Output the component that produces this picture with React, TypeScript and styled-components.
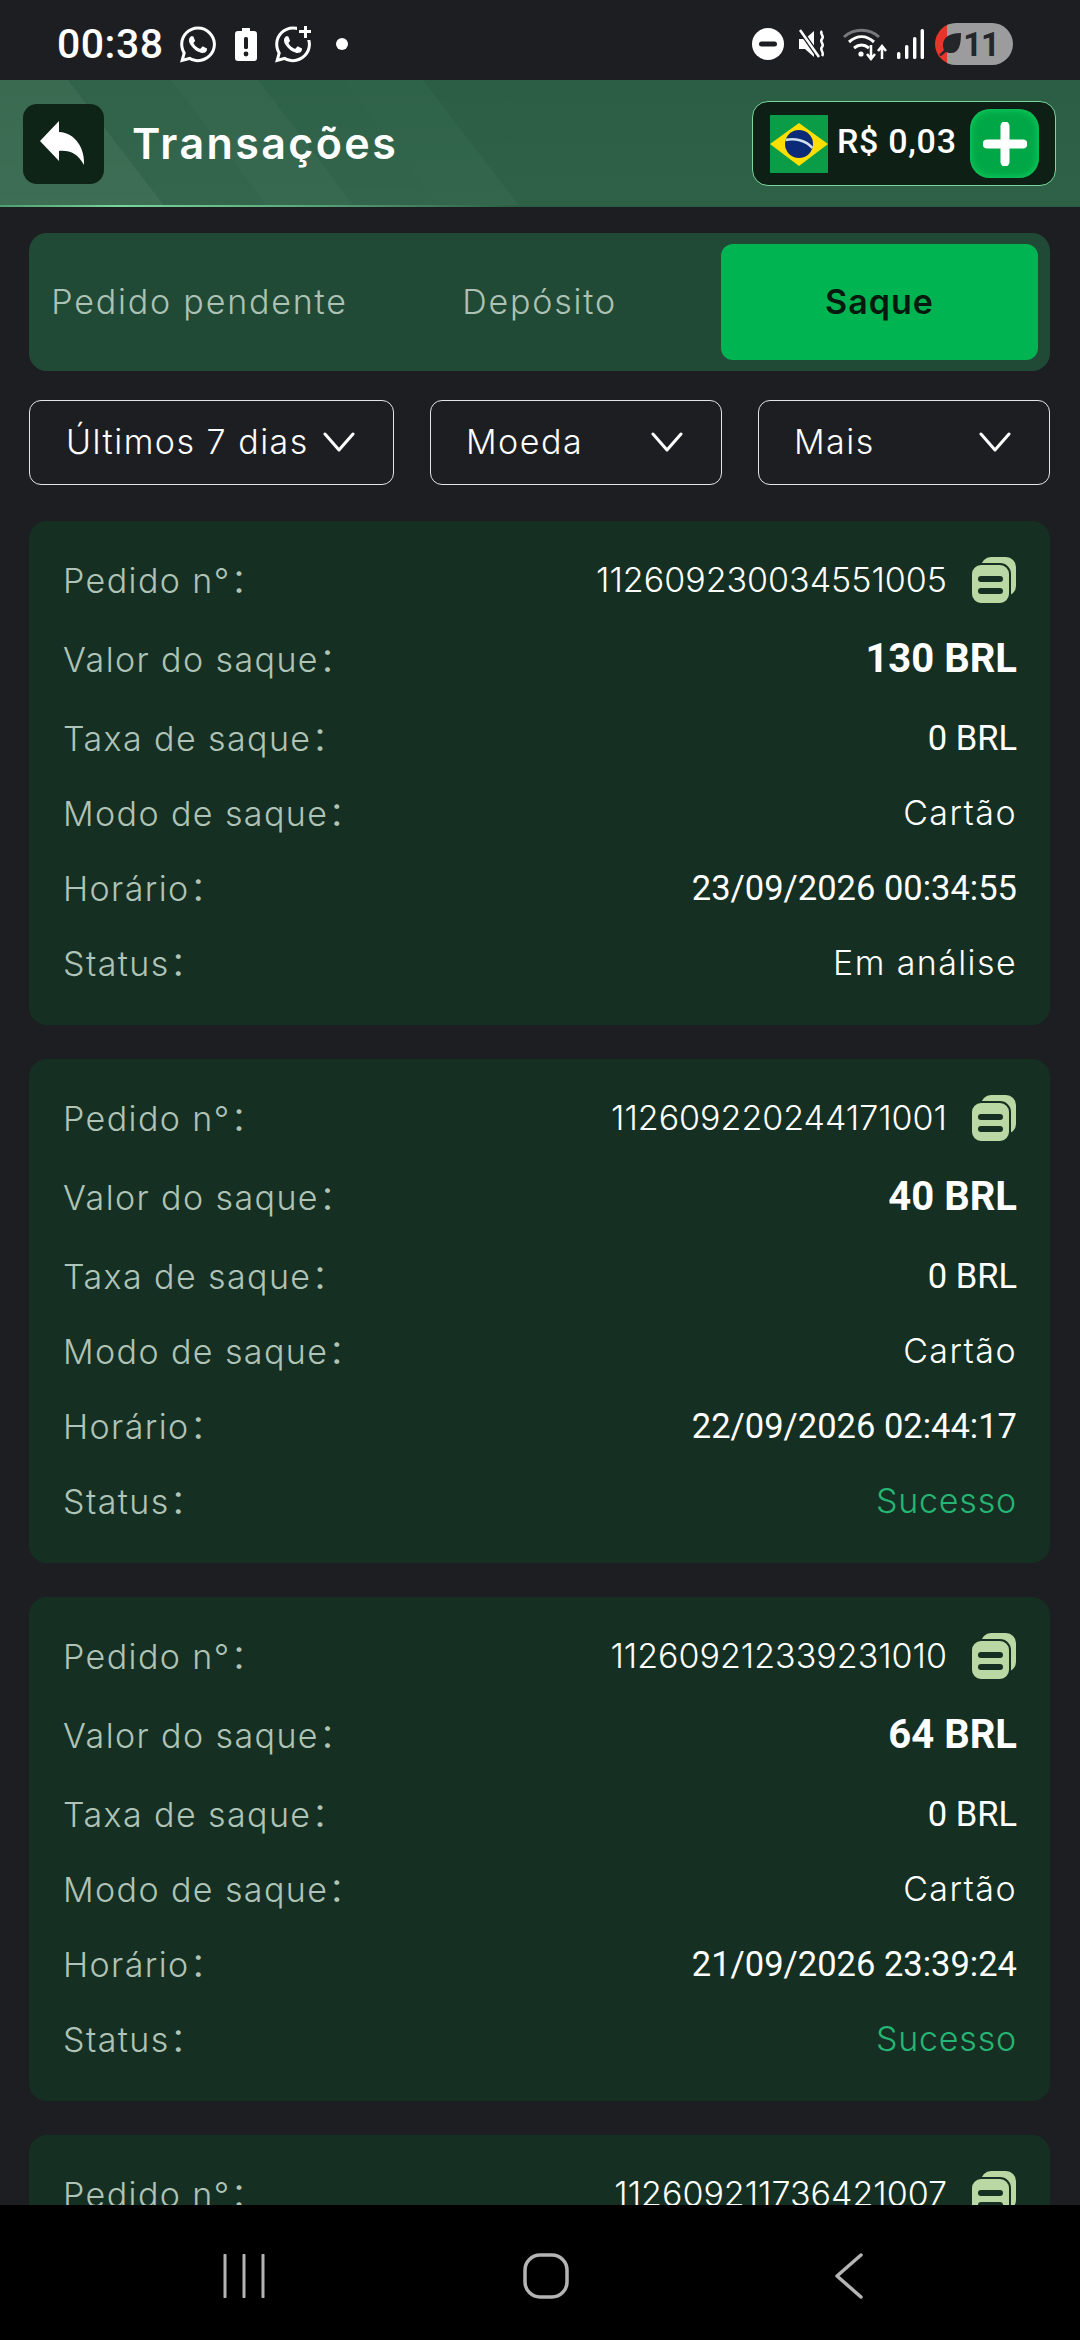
import { createGlobalStyle } from "styled-components";
import styled from "styled-components";
import { FaWhatsapp } from "react-icons/fa";

const GlobalStyle = createGlobalStyle`
  html, body {
    margin: 0;
    padding: 0;
    background: #1c1e22;
  }
  * {
    box-sizing: border-box;
  }
`;

const SANS = `"Inter", "Noto Sans CJK SC", sans-serif`;
const NUM = `"Roboto", sans-serif`;

const Screen = styled.div`
  width: 1080px;
  height: 2340px;
  display: flex;
  flex-direction: column;
  overflow: hidden;
  background: #1c1e22;
  font-family: ${SANS};
`;

const StatusBar = styled.div`
  height: 80px;
  flex: none;
  display: flex;
  align-items: center;
  justify-content: space-between;
  padding: 8px 67px 0 57px;
  color: #fff;
`;

const StatusGroup = styled.div`
  display: flex;
  align-items: center;
`;

const Clock = styled.span`
  font-family: ${NUM};
  font-size: 41px;
  font-weight: 500;
  letter-spacing: 0.5px;
  margin-right: 16px;
`;

const WhatsIcon = styled.span<{ $gap?: number }>`
  position: relative;
  width: 36px;
  height: 36px;
  margin-left: ${({ $gap }) => $gap ?? 0}px;
  display: flex;
  align-items: center;
  justify-content: center;
  font-size: 41px;
`;

const PlusBadge = styled.span`
  position: absolute;
  top: -3px;
  right: -3px;
  width: 17px;
  height: 17px;
  background:
    linear-gradient(#fff, #fff) center / 12px 3px no-repeat,
    linear-gradient(#fff, #fff) center / 3px 12px no-repeat,
    #1c1e22;
`;

const Dot = styled.span`
  width: 12px;
  height: 12px;
  border-radius: 50%;
  background: #fff;
  margin-left: 25px;
`;

const StatusIcon = styled.svg<{ $gap: number }>`
  display: block;
  margin-left: ${({ $gap }) => $gap}px;
`;

const BatteryPill = styled.div`
  width: 78px;
  height: 42px;
  margin-left: 11px;
  border-radius: 21px;
  background: linear-gradient(90deg, #e8352b 0 12px, #9c9c9e 12px);
  display: flex;
  align-items: center;
  justify-content: flex-end;
  padding-right: 14px;
  gap: 1px;
  color: #25262a;
  font-family: ${NUM};
  font-size: 33px;
  font-weight: 700;
  letter-spacing: -1px;
`;

const Header = styled.header`
  position: relative;
  height: 127px;
  flex: none;
  display: flex;
  align-items: center;
  justify-content: space-between;
  padding: 0 24px 0 23px;
  background:
    linear-gradient(rgba(255, 255, 255, 0), rgba(255, 255, 255, 0.02)),
    linear-gradient(52.6deg,
      #3a6b51 0 131px, #30634a 131px 213px, #33664c 213px 282px, #2e6248 282px 350px,
      #2f6349 350px 413px, #2b5e44 413px);
  &::after {
    content: "";
    position: absolute;
    left: 0;
    right: 0;
    bottom: 0;
    height: 2px;
    background: linear-gradient(90deg, #4f9e70 0, #78d79a 120px, #5ba87c 300px, #2b5e44 520px);
  }
`;

const HeaderLeft = styled.div`
  display: flex;
  align-items: center;
  gap: 28px;
`;

const BackButton = styled.button`
  width: 81px;
  height: 80px;
  padding: 0;
  border: none;
  border-radius: 14px;
  background: #0e2416;
  display: flex;
  align-items: center;
  justify-content: center;
`;

const Title = styled.h1`
  margin: 0 0 2px;
  color: #fff;
  font-size: 43px;
  font-weight: 600;
  letter-spacing: 2.4px;
`;

const Balance = styled.div`
  width: 304px;
  height: 85px;
  display: flex;
  align-items: center;
  padding: 0 16px 0 17px;
  border: 1.5px solid #7bd79b;
  border-radius: 16px;
  background: #0e2016;
`;

const BalanceText = styled.span`
  flex: 1;
  margin: 0 0 5px 9px;
  color: #fff;
  font-family: ${NUM};
  font-size: 34px;
  font-weight: 500;
  letter-spacing: 0.7px;
  white-space: nowrap;
`;

const PlusButton = styled.button`
  width: 69px;
  height: 69px;
  padding: 0;
  border: none;
  border-radius: 20px;
  background: #00a746;
  box-shadow: inset 0 0 8px #12d866;
  display: flex;
  align-items: center;
  justify-content: center;
`;

const Main = styled.main`
  flex: 1;
  min-height: 0;
  overflow: hidden;
  padding: 26px 30px 0 29px;
`;

const Tabs = styled.div`
  height: 138px;
  display: grid;
  grid-template-columns: repeat(3, 317px);
  justify-content: space-between;
  padding: 11px 12px;
  border-radius: 18px;
  background: #214a36;
`;

const Tab = styled.button<{ $active?: boolean }>`
  border: none;
  padding: 0 0 2px;
  border-radius: 12px;
  background: ${({ $active }) => ($active ? "#00b451" : "transparent")};
  color: ${({ $active }) => ($active ? "#06190e" : "#adc2b5")};
  font-family: ${SANS};
  font-size: 34px;
  font-weight: ${({ $active }) => ($active ? 600 : 350)};
  letter-spacing: ${({ $active }) => ($active ? 1 : 1.8)}px;
  white-space: nowrap;
`;

const Filters = styled.div`
  margin-top: 29px;
  display: grid;
  grid-template-columns: 365px 292px 292px;
  justify-content: space-between;
`;

const Filter = styled.button<{ $pad: number }>`
  height: 85px;
  display: flex;
  align-items: center;
  justify-content: space-between;
  padding: 0 38px 2px ${({ $pad }) => $pad}px;
  border: 1.5px solid #e4e6e5;
  border-radius: 12px;
  background: transparent;
  color: #fff;
  font-family: ${SANS};
  font-size: 34px;
  font-weight: 350;
  letter-spacing: 1.5px;
`;

const CardList = styled.div`
  margin-top: 36px;
  display: flex;
  flex-direction: column;
  gap: 34px;
`;

const Card = styled.section`
  flex: none;
  display: flex;
  flex-direction: column;
  gap: 29px;
  padding: 35px 33px 40px 34px;
  border-radius: 18px;
  background: #153022;
`;

const Row = styled.div<{ $tall?: boolean }>`
  height: ${({ $tall }) => ($tall ? 54 : 46)}px;
  display: flex;
  align-items: center;
  justify-content: space-between;
`;

const Label = styled.span`
  padding-bottom: 2px;
  color: #b0c3b7;
  font-size: 34px;
  font-weight: 350;
  letter-spacing: 1.4px;
`;

type ValueKind = "text" | "num" | "amount" | "ok";

const Value = styled.span<{ $kind: ValueKind }>`
  display: flex;
  align-items: center;
  padding-top: ${({ $kind }) => ($kind === "num" ? 2 : $kind === "amount" ? 0 : 1)}px;
  color: ${({ $kind }) => ($kind === "ok" ? "#26b574" : "#fff")};
  font-family: ${({ $kind }) => ($kind === "num" || $kind === "amount" ? NUM : SANS)};
  font-size: ${({ $kind }) => ($kind === "amount" ? 40 : $kind === "num" ? 34.5 : 34)}px;
  font-weight: ${({ $kind }) => ($kind === "amount" ? 700 : $kind === "num" ? 400 : 350)};
  letter-spacing: ${({ $kind }) => ($kind === "text" ? 1.4 : $kind === "ok" ? 0.8 : 0)}px;
`;

const OrderId = styled.span`
  margin-right: 25px;
  letter-spacing: 0;
`;

const NavBar = styled.nav`
  height: 135px;
  flex: none;
  display: grid;
  grid-template-columns: 300px 311px 1fr;
  align-items: center;
  justify-items: start;
  padding: 7px 0 0 223px;
  background: #000;
`;

const orders = [
  { id: "112609230034551005", amount: "130 BRL", time: "23/09/2026 00:34:55", status: "Em análise", ok: false },
  { id: "112609220244171001", amount: "40 BRL", time: "22/09/2026 02:44:17", status: "Sucesso", ok: true },
  { id: "112609212339231010", amount: "64 BRL", time: "21/09/2026 23:39:24", status: "Sucesso", ok: true },
];

function CopyIcon() {
  return (
    <svg width="45" height="46" viewBox="0 0 45 46">
      <rect x="9" y="0" width="35" height="39" rx="10" fill="#b9d8a3" />
      <rect x="-1" y="7" width="39" height="40" rx="10" fill="#b9d8a3" stroke="#153022" strokeWidth="2" />
      <rect x="6" y="19" width="25" height="6" rx="3" fill="#153022" />
      <rect x="6" y="31" width="25" height="6" rx="3" fill="#153022" />
    </svg>
  );
}

function Chevron() {
  return (
    <svg width="32" height="20" viewBox="0 0 32 20">
      <path d="M2 2l14 16L30 2" fill="none" stroke="#fff" strokeWidth="3" strokeLinecap="round" strokeLinejoin="round" />
    </svg>
  );
}

function BrazilFlag() {
  return (
    <svg width="58" height="58" viewBox="0 0 58 58">
      <rect width="58" height="58" fill="#0a9c47" />
      <path d="M29 8L58 29 29 51 0 29z" fill="#fedf00" />
      <circle cx="29" cy="29" r="14" fill="#0b2a78" />
      <path d="M15.5 25c9-2 20 0 27 8" fill="none" stroke="#cfe0ea" strokeWidth="2.5" />
    </svg>
  );
}

function OrderCard({ order }: { order: (typeof orders)[number] }) {
  return (
    <Card>
      <Row>
        <Label>Pedido n°：</Label>
        <Value $kind="text">
          <OrderId>{order.id}</OrderId>
          <CopyIcon />
        </Value>
      </Row>
      <Row $tall>
        <Label>Valor do saque：</Label>
        <Value $kind="amount">{order.amount}</Value>
      </Row>
      <Row>
        <Label>Taxa de saque：</Label>
        <Value $kind="num">0 BRL</Value>
      </Row>
      <Row>
        <Label>Modo de saque：</Label>
        <Value $kind="text">Cartão</Value>
      </Row>
      <Row>
        <Label>Horário：</Label>
        <Value $kind="num">{order.time}</Value>
      </Row>
      <Row>
        <Label>Status：</Label>
        <Value $kind={order.ok ? "ok" : "text"}>{order.status}</Value>
      </Row>
    </Card>
  );
}

export default function App() {
  return (
    <Screen>
      <GlobalStyle />
      <StatusBar>
        <StatusGroup>
          <Clock>00:38</Clock>
          <WhatsIcon>
            <FaWhatsapp />
          </WhatsIcon>
          <StatusIcon $gap={19} width="22" height="33" viewBox="0 0 22 33">
            <path d="M7 0h8v3h4c2 0 3 1 3 3v24c0 2-1 3-3 3H3c-2 0-3-1-3-3V6c0-2 1-3 3-3h4z" fill="#fff" />
            <rect x="9" y="9" width="4" height="12" rx="1.5" fill="#1c1e22" />
            <circle cx="11" cy="26" r="2.4" fill="#1c1e22" />
          </StatusIcon>
          <WhatsIcon $gap={18}>
            <FaWhatsapp />
            <PlusBadge />
          </WhatsIcon>
          <Dot />
        </StatusGroup>
        <StatusGroup>
          <StatusIcon $gap={0} width="32" height="32" viewBox="0 0 32 32">
            <circle cx="16" cy="16" r="16" fill="#fff" />
            <rect x="7" y="13.5" width="18" height="5" rx="2.5" fill="#1c1e22" />
          </StatusIcon>
          <StatusIcon $gap={14} width="30" height="30" viewBox="0 0 30 30">
            <path d="M1 10h6l9-8v26l-9-8H1z" fill="#fff" />
            <path d="M2 1l19 27" stroke="#1c1e22" strokeWidth="5" />
            <path d="M2 1l19 27" stroke="#fff" strokeWidth="2.5" />
            <path d="M24 2c-3 3 3 5 0 8s3 5 0 8 3 5 0 9" fill="none" stroke="#fff" strokeWidth="2.5" />
          </StatusIcon>
          <StatusIcon $gap={14} width="46" height="34" viewBox="0 0 46 34">
            <path d="M2 10C12 1 27 1 37 10" fill="none" stroke="#77787b" strokeWidth="3" />
            <path d="M7 15C15 8 24 8 32 15" fill="none" stroke="#fff" strokeWidth="3" />
            <path d="M12 21c5-4 10-4 15 0" fill="none" stroke="#fff" strokeWidth="3" />
            <circle cx="19" cy="27" r="2.6" fill="#fff" />
            <path d="M29 18v13m-4-4l4 5 4-5" fill="none" stroke="#fff" strokeWidth="2.5" />
            <path d="M40 32V20m-4 4l4-5 4 5" fill="none" stroke="#fff" strokeWidth="2.5" />
          </StatusIcon>
          <StatusIcon $gap={9} width="27" height="30" viewBox="0 0 27 30">
            <rect x="0" y="23" width="3.4" height="7" rx="1.5" fill="#fff" />
            <rect x="8" y="16" width="3.4" height="14" rx="1.5" fill="#fff" />
            <rect x="16" y="8" width="3.4" height="22" rx="1.5" fill="#fff" />
            <rect x="23.6" y="0" width="3.4" height="30" rx="1.5" fill="#fff" />
          </StatusIcon>
          <BatteryPill>
            <svg width="24" height="24" viewBox="0 0 24 24">
              <path d="M23 1C12 1 5 5 5 13c0 2 .5 4 1 5L1 23l2 1 5-4c2 1 4 1 5 1 8 0 10-8 10-20z" fill="#25262a" />
            </svg>
            11
          </BatteryPill>
        </StatusGroup>
      </StatusBar>

      <Header>
        <HeaderLeft>
          <BackButton type="button">
            <svg width="81" height="80" viewBox="0 0 81 80">
              <path d="M36 17L17 37l19 20V47c11-1 19 3 25 14 1-16-8-32-25-33z" fill="#fff" />
            </svg>
          </BackButton>
          <Title>Transações</Title>
        </HeaderLeft>
        <Balance>
          <BrazilFlag />
          <BalanceText>R$ 0,03</BalanceText>
          <PlusButton type="button">
            <svg width="44" height="44" viewBox="0 0 44 44">
              <path d="M22 4v36M4 22h36" stroke="#fff" strokeWidth="9" strokeLinecap="round" />
            </svg>
          </PlusButton>
        </Balance>
      </Header>

      <Main>
        <Tabs>
          <Tab type="button">Pedido pendente</Tab>
          <Tab type="button">Depósito</Tab>
          <Tab type="button" $active>
            Saque
          </Tab>
        </Tabs>
        <Filters>
          <Filter type="button" $pad={36}>
            Últimos 7 dias
            <Chevron />
          </Filter>
          <Filter type="button" $pad={35}>
            Moeda
            <Chevron />
          </Filter>
          <Filter type="button" $pad={35}>
            Mais
            <Chevron />
          </Filter>
        </Filters>
        <CardList>
          {orders.map((order) => (
            <OrderCard key={order.id} order={order} />
          ))}
          <Card>
            <Row>
              <Label>Pedido n°：</Label>
              <Value $kind="text">
                <OrderId>112609211736421007</OrderId>
                <CopyIcon />
              </Value>
            </Row>
          </Card>
        </CardList>
      </Main>

      <NavBar>
        <svg width="42" height="44" viewBox="0 0 42 44">
          <path d="M2 1v42M21 1v42M40 1v42" stroke="#b4b4b4" strokeWidth="3" strokeLinecap="round" />
        </svg>
        <svg width="46" height="46" viewBox="0 0 46 46">
          <rect x="2" y="2" width="42" height="42" rx="15" fill="none" stroke="#b4b4b4" strokeWidth="3.5" />
        </svg>
        <svg width="30" height="46" viewBox="0 0 30 46">
          <path d="M27 2L3 23l24 21" fill="none" stroke="#b4b4b4" strokeWidth="3.5" strokeLinecap="round" strokeLinejoin="round" />
        </svg>
      </NavBar>
    </Screen>
  );
}
